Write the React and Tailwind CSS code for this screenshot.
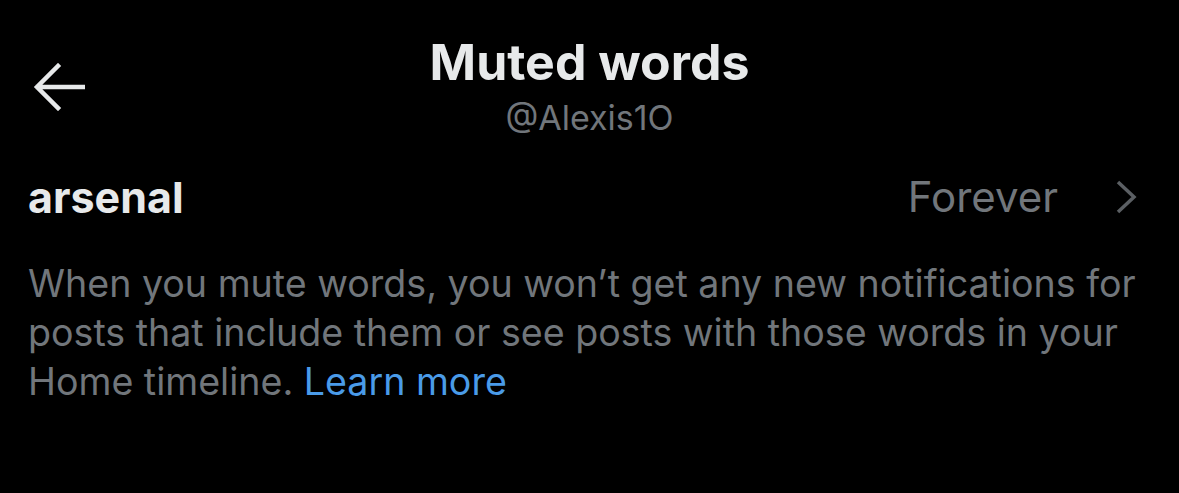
import React from 'react';

const BackArrow = () => (
  <svg width="52" height="48" viewBox="0 0 52 48" fill="none" className="block">
    {/* shaft and head of the back arrow */}
    <path
      d="M50 24H5M25 3L4 24l21 21"
      stroke="#e7e9ea"
      strokeWidth="4.5"
      strokeLinecap="square"
    />
  </svg>
);

const Chevron = () => (
  <svg width="22" height="34" viewBox="0 0 22 34" fill="none" className="block">
    <path d="M3 2l16 15L3 32" stroke="#5b5f63" strokeWidth="3.5" />
  </svg>
);

export default function App() {
  return (
    <div
      className="min-h-[493px] w-full bg-black text-[#e7e9ea]"
      style={{ fontFamily: 'Inter, "Noto Sans", sans-serif' }}
    >
      {/* Header */}
      <div className="grid grid-cols-[1fr_auto_1fr] items-center pt-[34px]">
        <div className="pl-[33px] pt-[2px]">
          <BackArrow />
        </div>
        <div className="flex flex-col items-center">
          <h1 className="text-[50px] leading-[56px] font-bold">Muted words</h1>
          <p className="mt-[8px] text-[34px] leading-[40px] text-[#71767b]">
            @Alexis1O
          </p>
        </div>
        <div />
      </div>

      {/* Muted word row */}
      <div className="mt-[33px] flex items-center justify-between pl-[28px] pr-[42px]">
        <span className="text-[43px] leading-[52px] font-bold">arsenal</span>
        <div className="flex items-center gap-[57px]">
          <span className="text-[42px] leading-[52px] text-[#71767b]">Forever</span>
          <Chevron />
        </div>
      </div>

      {/* Explanation */}
      <p className="mt-[36px] px-[28px] text-[37.6px] leading-[49px] text-[#71767b]">
        When you mute words, you won’t get any new notifications for posts that
        include them or see posts with those words in your Home timeline.{' '}
        <span className="text-[#4a9be8]">Learn more</span>
      </p>
    </div>
  );
}
